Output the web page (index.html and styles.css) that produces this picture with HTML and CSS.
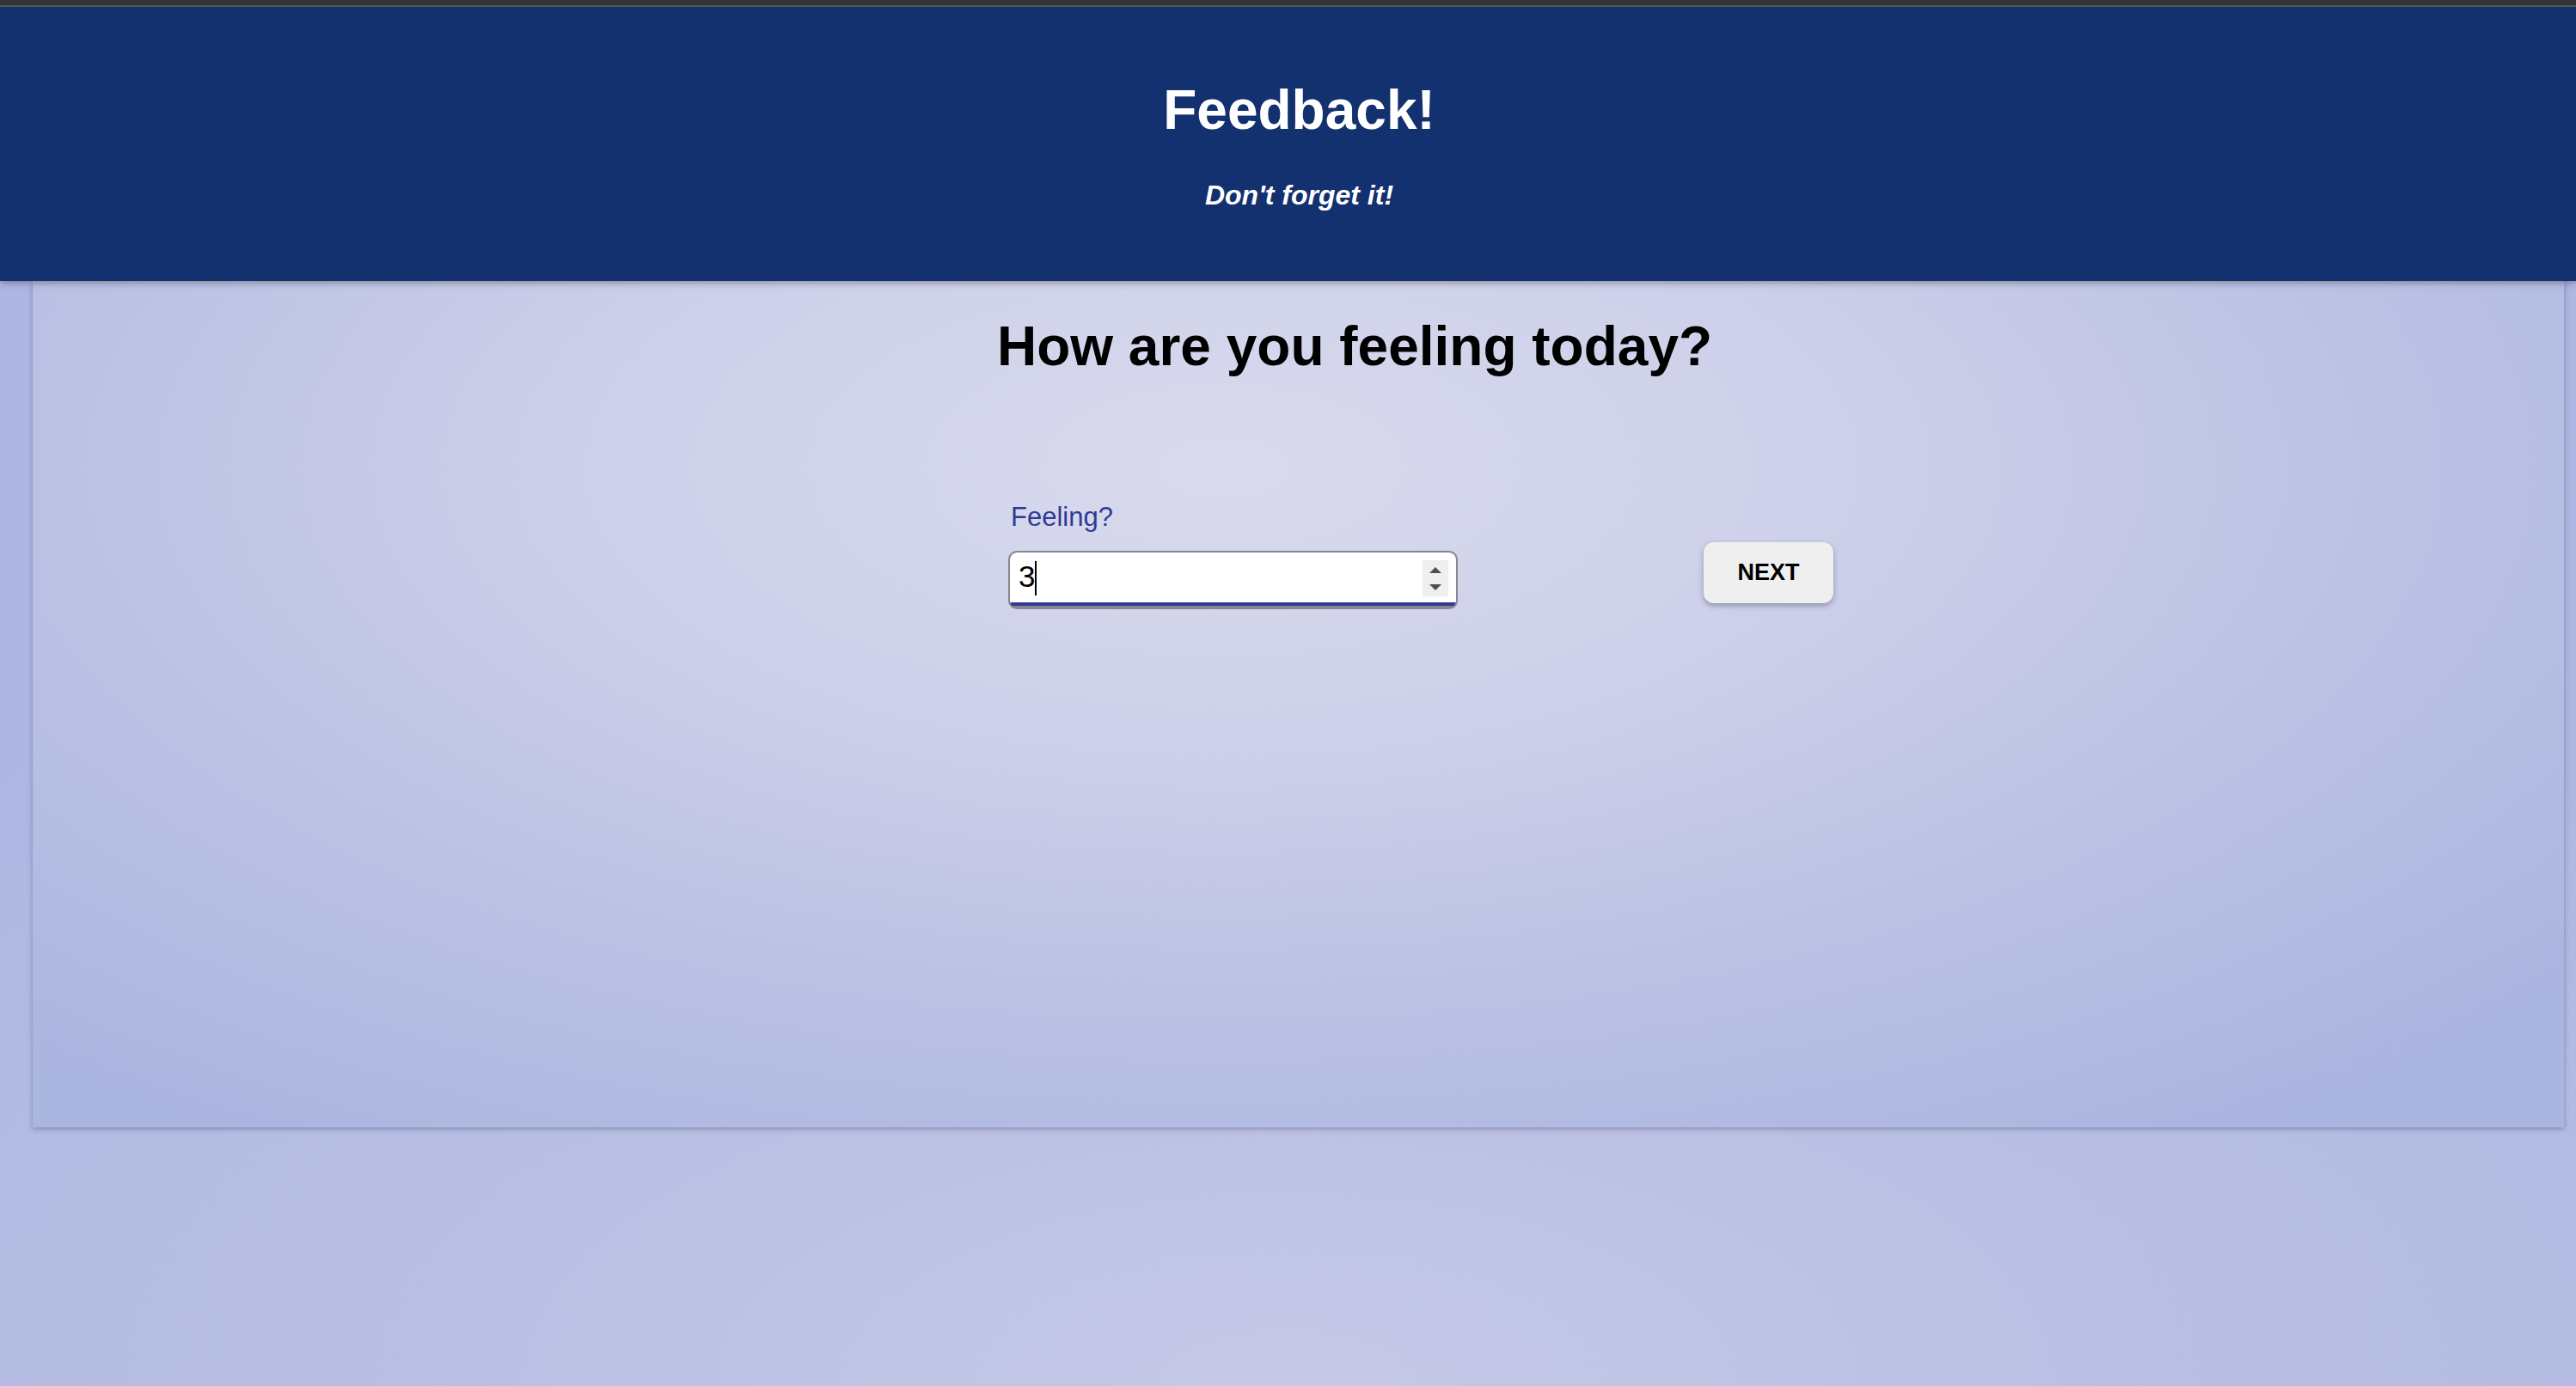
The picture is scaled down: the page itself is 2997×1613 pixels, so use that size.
FILE: index.html
```html
<!DOCTYPE html>
<html lang="en">
<head>
<meta charset="utf-8">
<title>Feedback!</title>
<link rel="stylesheet" href="styles.css">
</head>
<body>
<div class="topbar"></div>
<header class="header">
  <h1 class="header-title">Feedback!</h1>
  <p class="header-sub">Don't forget it!</p>
</header>
<main class="card">
  <h2 class="question">How are you feeling today?</h2>
  <form class="form-row" onsubmit="return false;">
    <div class="field">
      <label class="field-label" for="feeling">Feeling?</label>
      <div class="input-wrap">
        <input class="field-input" id="feeling" type="number" value="3">
        <span class="caret"></span>
        <span class="spinner">
          <span class="arrow arrow-up"></span>
          <span class="arrow arrow-down"></span>
        </span>
      </div>
    </div>
    <button class="next-btn" type="button">NEXT</button>
  </form>
</main>
</body>
</html>
```

FILE: styles.css
```css
html, body {
  margin: 0;
  padding: 0;
}

body {
  min-height: 1613px;
  font-family: "Liberation Sans", Arial, Helvetica, sans-serif;
  background: radial-gradient(ellipse 75% 60% at 50% 100%, #c6c9e8 0%, #b9bfe3 45%, #adb7e2 100%);
  overflow: hidden;
}

.topbar {
  height: 6px;
  background: #343437;
  border-bottom: 2px solid #5d5d60;
}

.header {
  position: relative;
  z-index: 2;
  box-sizing: border-box;
  height: 319px;
  padding: 84px 0 0 26px;
  background: #13306f;
  color: #ffffff;
  text-align: center;
  box-shadow: 0 2px 8px rgba(0, 0, 0, 0.35);
}

.header-title {
  margin: 0;
  font-size: 64px;
  line-height: 1.15;
  font-weight: 700;
}

.header-sub {
  margin: 43px 0 0 0;
  font-size: 32px;
  line-height: 1.15;
  font-weight: 700;
  font-style: italic;
}

.card {
  position: relative;
  z-index: 1;
  box-sizing: border-box;
  height: 985px;
  margin: 0 14px 0 38px;
  padding-top: 40px;
  background: radial-gradient(ellipse 70% 95% at 47% 22%, #d9daed 0%, #cdd0e9 35%, #bcc2e4 65%, #aab5e0 100%);
  box-shadow: 0 2px 6px rgba(40, 50, 90, 0.35);
}

.question {
  margin: 0;
  padding-left: 131px;
  font-size: 64px;
  line-height: 1.15;
  font-weight: 700;
  color: #000000;
  text-align: center;
}

.form-row {
  display: flex;
  align-items: flex-end;
  justify-content: center;
  gap: 286px;
  margin: 143px 0 0 0;
  padding-left: 285px;
}

.field {
  display: flex;
  flex-direction: column;
  gap: 22px;
}

.field-label {
  padding-left: 3px;
  font-size: 31px;
  line-height: 1.15;
  color: #2e3a94;
}

.input-wrap {
  position: relative;
  box-sizing: border-box;
  display: flex;
  align-items: flex-start;
  width: 523px;
  height: 68px;
  border: 2px solid #86878e;
  border-radius: 10px;
  background: #86878e;
  overflow: hidden;
}

.field-input {
  box-sizing: border-box;
  flex: 1;
  min-width: 0;
  height: 62px;
  margin: 0;
  padding: 0 0 2px 10px;
  border: none;
  border-bottom: 4px solid #2f3b96;
  border-radius: 8px 8px 0 0;
  outline: none;
  background: #ffffff;
  font-family: "Liberation Sans", Arial, Helvetica, sans-serif;
  font-size: 35px;
  color: #000000;
  -moz-appearance: textfield;
  appearance: textfield;
}

.field-input::-webkit-inner-spin-button,
.field-input::-webkit-outer-spin-button {
  -webkit-appearance: none;
  margin: 0;
}

.caret {
  position: absolute;
  left: 29px;
  top: 10px;
  width: 2px;
  height: 40px;
  background: #000000;
}

.spinner {
  box-sizing: border-box;
  display: flex;
  flex-direction: column;
  align-items: center;
  justify-content: center;
  gap: 13px;
  width: 30px;
  height: 42px;
  margin: 9px 9px 0 -39px;
  background: #efefef;
}

.arrow {
  width: 0;
  height: 0;
  border-left: 7px solid transparent;
  border-right: 7px solid transparent;
}

.arrow-up {
  border-bottom: 7px solid #4f4f4f;
}

.arrow-down {
  border-top: 7px solid #4f4f4f;
}

.next-btn {
  box-sizing: border-box;
  width: 151px;
  height: 71px;
  margin: 0 0 7px 0;
  padding: 0;
  border: none;
  border-radius: 12px;
  background: #efefef;
  box-shadow: 0 3px 6px rgba(30, 35, 70, 0.35);
  font-family: "Liberation Sans", Arial, Helvetica, sans-serif;
  font-size: 27px;
  font-weight: 700;
  color: #000000;
  cursor: pointer;
}
```
